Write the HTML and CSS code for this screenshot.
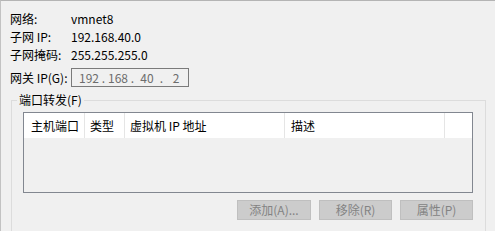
FILE: index.html
```html
<!DOCTYPE html>
<html lang="zh-CN">
<head>
<meta charset="utf-8">
<title>NAT 设置</title>
<link rel="stylesheet" href="styles.css">
</head>
<body>
<div class="page">
  <div class="info">
    <div class="row"><span class="lbl">网络:</span><span class="val">vmnet8</span></div>
    <div class="row"><span class="lbl">子网 IP:</span><span class="val">192.168.40.0</span></div>
    <div class="row"><span class="lbl">子网掩码:</span><span class="val">255.255.255.0</span></div>
    <div class="row gw">
      <span class="lbl">网关 IP(G):</span>
      <div class="ipbox">
        <span class="oct">192</span><span class="dot">.</span>
        <span class="oct">168</span><span class="dot">.</span>
        <span class="oct">40</span><span class="dot">.</span>
        <span class="oct">2</span>
      </div>
    </div>
  </div>
  <fieldset class="group">
    <legend>端口转发(F)</legend>
    <div class="list">
      <div class="head">
        <div class="col c1">主机端口</div>
        <div class="col c2">类型</div>
        <div class="col c3">虚拟机 IP 地址</div>
        <div class="col c4">描述</div>
        <div class="col c5"></div>
      </div>
    </div>
    <div class="buttons">
      <button class="btn b1" disabled>添加(A)...</button>
      <button class="btn" disabled>移除(R)</button>
      <button class="btn" disabled>属性(P)</button>
    </div>
  </fieldset>
</div>
</body>
</html>
```

FILE: styles.css
```css
html, body {
  margin: 0;
  padding: 0;
  height: 100%;
  overflow: hidden;
}
body {
  background: #f0f0f0;
  font-family: "Noto Sans CJK SC", "Noto Sans", sans-serif;
  font-size: 12px;
  color: #000;
}
.page {
  box-sizing: border-box;
  height: 100%;
  border-top: 1px solid #b4b4b4;
  border-left: 1px solid #c2c2c2;
}
.info {
  padding: 8px 0 0 9px;
}
.row {
  display: flex;
  align-items: center;
  height: 18px;
}
.lbl {
  width: 61px;
  flex: none;
}
.row.gw {
  margin-top: 5px;
  height: 19px;
}
.ipbox {
  box-sizing: border-box;
  width: 118px;
  height: 19px;
  border: 1px solid #7a7a7a;
  background: #f0f0f0;
  color: #6d6d6d;
  display: flex;
  align-items: center;
  padding-left: 7px;
}
.oct {
  display: inline-block;
  width: 20px;
  text-align: center;
}
.oct:first-child { text-align: left; }
.dot {
  display: inline-block;
  width: 9px;
  text-align: center;
}
.group {
  box-sizing: border-box;
  margin: 6px 0 0 10px;
  width: 475px;
  height: 140px;
  border: 1px solid #dcdcdc;
  padding: 5px 12px 0 11px;
}
.group legend {
  padding: 0 2px;
  margin-left: -6px;
  line-height: 14px;
}
.list {
  box-sizing: border-box;
  width: 450px;
  height: 81px;
  border: 1px solid #828790;
  background: #f0f0f0;
}
.head {
  display: flex;
  height: 25px;
  background: #fff;
}
.col {
  box-sizing: border-box;
  height: 25px;
  line-height: 25px;
  padding-left: 6px;
  border-right: 1px solid #e5e5e5;
  white-space: nowrap;
  flex: none;
}
.c1 { width: 61px; padding-left: 7px; }
.c2 { width: 40px; padding-left: 5px; }
.c3 { width: 160px; padding-left: 5px; }
.c4 { width: 160px; }
.c5 { width: 27px; border-right: none; }
.buttons {
  display: flex;
  justify-content: flex-end;
  gap: 8px;
  margin-top: 7px;
  width: 450px;
}
.btn {
  box-sizing: border-box;
  width: 73px;
  height: 20px;
  padding: 0;
  margin: 0;
  border: 1px solid #bfbfbf;
  background: #cccccc;
  color: #838383;
  font-family: inherit;
  font-size: 12px;
  line-height: 18px;
}
.btn.b1 { width: 74px; }
```
